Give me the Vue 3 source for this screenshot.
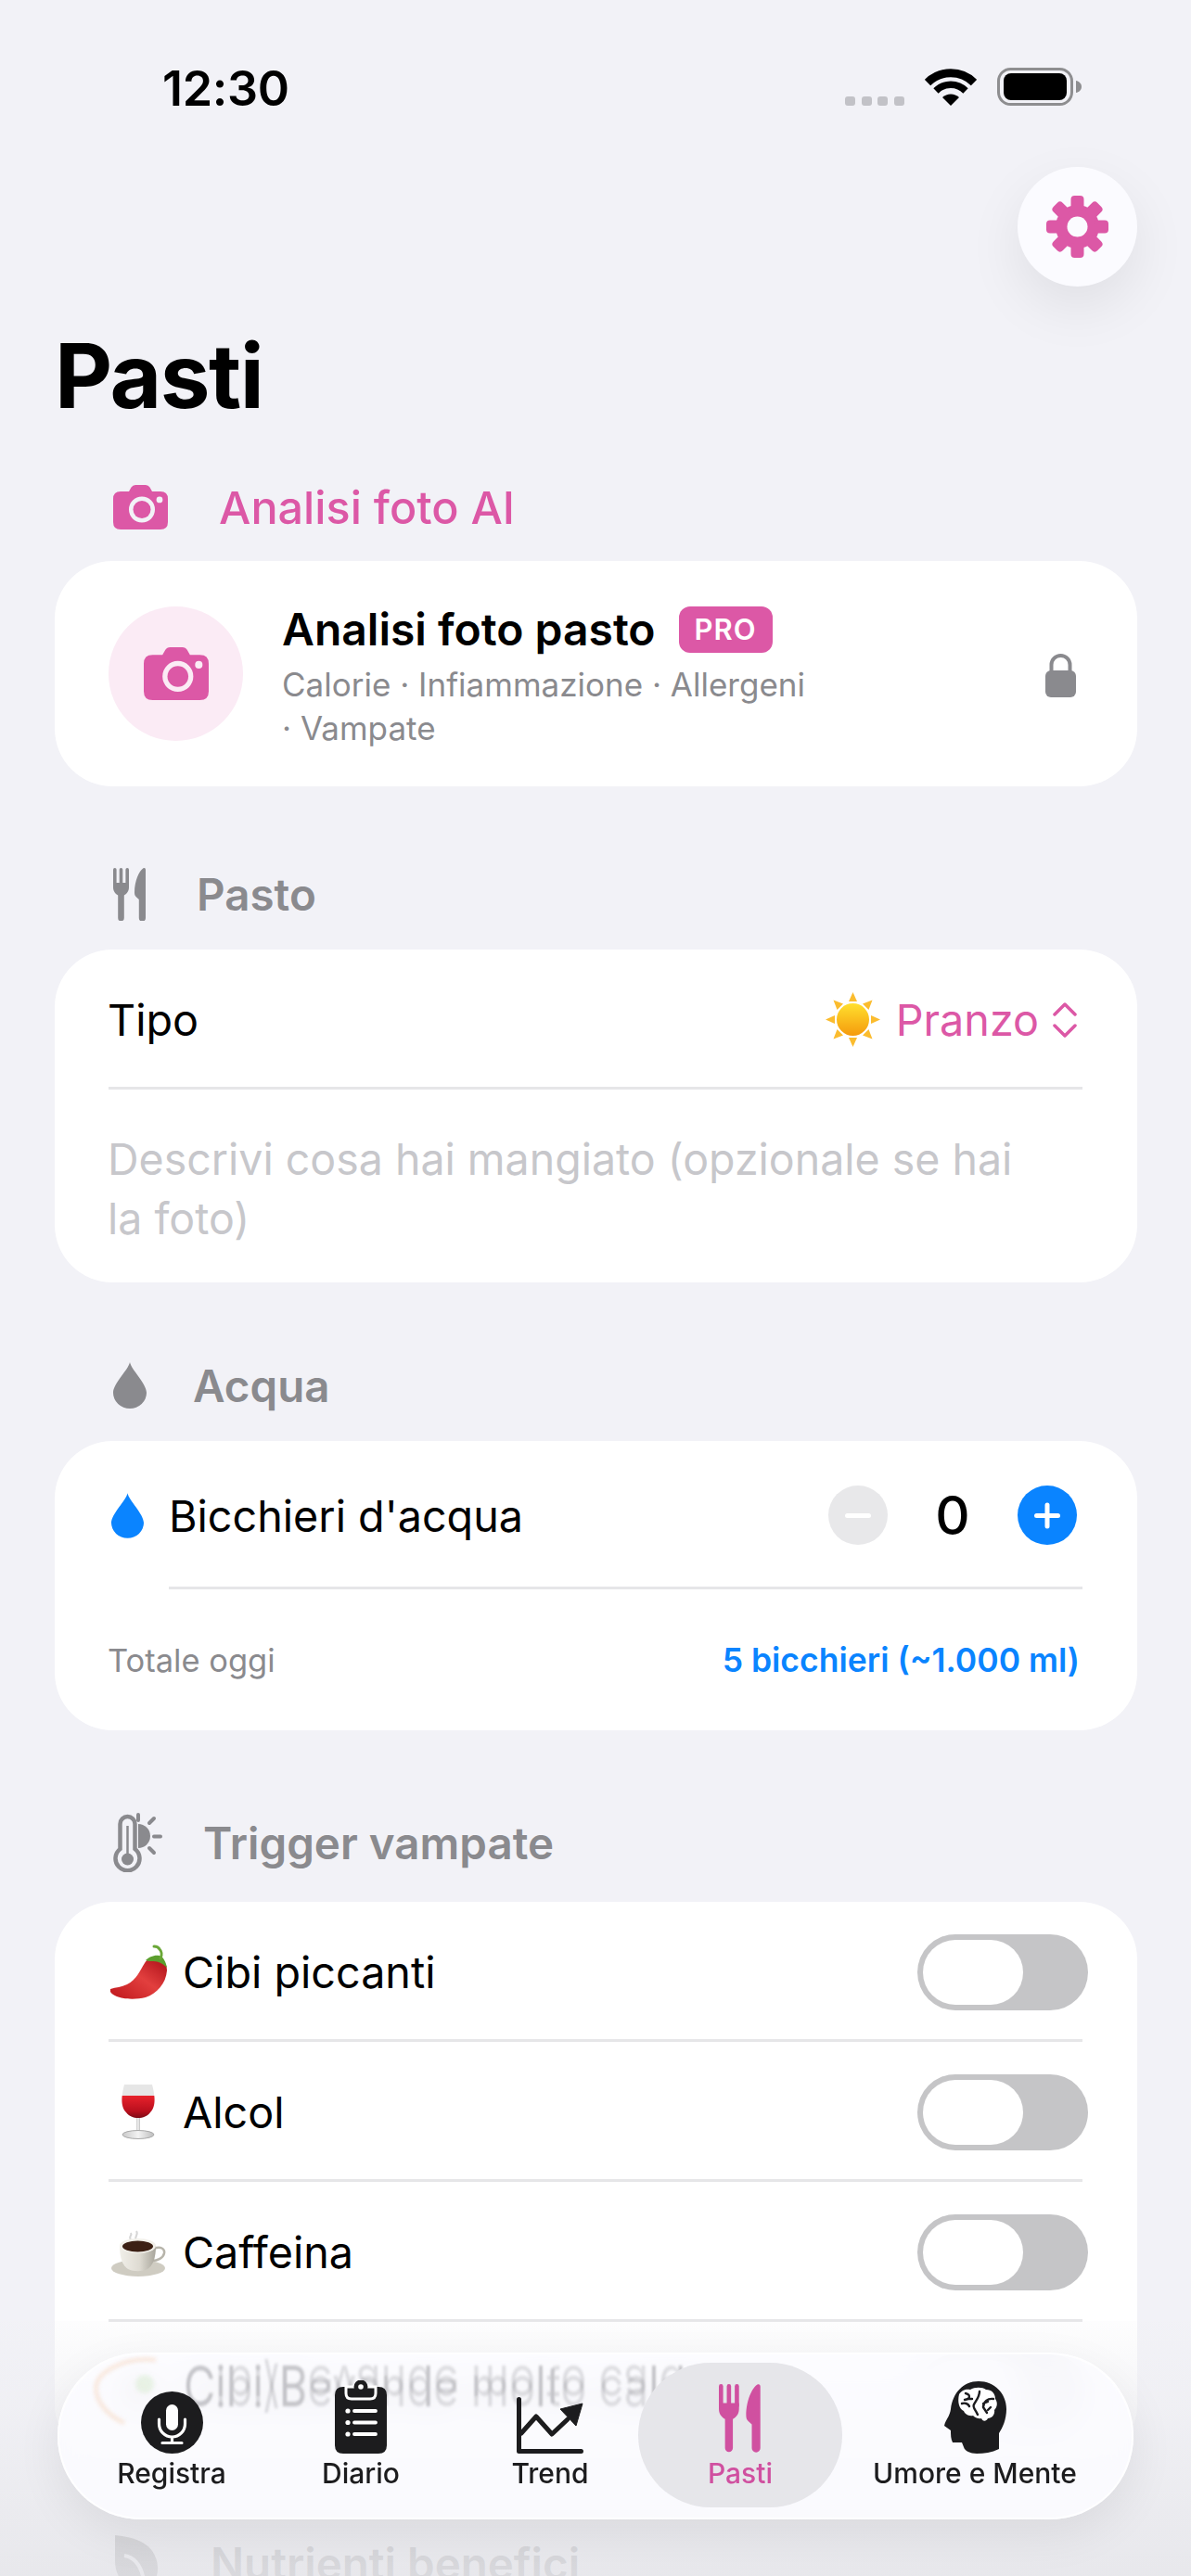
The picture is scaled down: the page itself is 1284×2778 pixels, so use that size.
<template>
  <div class="phone">
    <!-- shared glyphs -->
    <svg class="defs" width="0" height="0" aria-hidden="true">
      <defs>
        <linearGradient id="chiliFill" x1="0.1" y1="1" x2="0.9" y2="0.2">
          <stop offset="0" stop-color="#c21a1f" />
          <stop offset="0.6" stop-color="#e23f3e" />
          <stop offset="1" stop-color="#bb1c22" />
        </linearGradient>
        <linearGradient id="wineFill" x1="0" y1="0" x2="0" y2="1">
          <stop offset="0" stop-color="#e8222c" />
          <stop offset="0.7" stop-color="#b90f1d" />
          <stop offset="1" stop-color="#7d0b16" />
        </linearGradient>
        <linearGradient id="glassFill" x1="0" y1="0" x2="1" y2="0">
          <stop offset="0" stop-color="#c9c9c9" />
          <stop offset="0.5" stop-color="#f3f3f3" />
          <stop offset="1" stop-color="#bdbdbd" />
        </linearGradient>
        <linearGradient id="cupFill" x1="0" y1="0" x2="1" y2="0">
          <stop offset="0" stop-color="#f1efe9" />
          <stop offset="0.55" stop-color="#dedbd2" />
          <stop offset="1" stop-color="#a8a59b" />
        </linearGradient>
        <linearGradient id="sunFill" x1="0" y1="0" x2="0" y2="1">
          <stop offset="0" stop-color="#ffe02e" />
          <stop offset="1" stop-color="#f59a0c" />
        </linearGradient>
      </defs>
      <symbol id="camera" viewBox="0 0 59 48">
        <path
          fill-rule="evenodd"
          d="M8 7h9l2.500-4.500Q21 0 24 0h11q3 0 4.500 2.500L42 7h9q8 0 8 8v25q0 8-8 8H8q-8 0-8-8V15q0-8 8-8ZM31 12.500a14 14 0 1 0 0 28 14 14 0 0 0 0-28ZM50 12.500a3.400 3.400 0 1 0 0 6.800 3.400 3.400 0 0 0 0-6.800Z"
        />
        <circle cx="31" cy="26.500" r="9.500" />
      </symbol>
      <symbol id="forkKnife" viewBox="0 0 36 57">
        <rect x="0" y="0" width="3.600" height="20" rx="1.800" />
        <rect x="6.700" y="0" width="3.600" height="20" rx="1.800" />
        <rect x="13.400" y="0" width="3.600" height="20" rx="1.800" />
        <path d="M0 16h17v5c0 5-3.500 7.500-5.200 8.500V54a3.300 3.300 0 0 1-6.600 0V29.500C3.500 28.500 0 26 0 21Z" />
        <path d="M35 2v52a3.600 3.600 0 0 1-7.200 0V34l-3-2.800C23.500 30 23 28.500 23 26.500 23 14 28 3 32.500.300 34-.400 35 .500 35 2Z" />
      </symbol>
      <symbol id="drop" viewBox="0 0 36 50">
        <path d="M18 0c1.500 8 18 23 18 33a18 17 0 0 1-36 0C0 23 16.500 8 18 0Z" />
      </symbol>
      <symbol id="chili" viewBox="0 0 61 59">
        <path d="M0 48c6-2 12-2 18-5 10-5 14-15 19-23 3-5 9-7 14-6 7 2 10 8 10 14-1 14-11 25-23 29-12 3-28 2-35-3-3-2-4-4-3-6Z" fill="url(#chiliFill)" />
        <path d="M38 17c4-4 12-7 17-4 2 1 5 6 6 12-3-3-6-5-9-6-5-2-10 0-14-2Z" fill="#5c9e2e" />
        <path d="M54 15c2-4 1-8-1-10-1-2-3-3-6-3" fill="none" stroke="#6aa737" stroke-width="3" stroke-linecap="round" />
      </symbol>
      <symbol id="wine" viewBox="0 0 36 59">
        <path d="M3 0h30c3 11 4 22-2 30-3 4-8 6-13 6s-10-2-13-6C-1 22 0 11 3 0Z" fill="#e6e6e6" />
        <path d="M.700 12h34.600c.8 7 0 14-4.300 18-3 4-8 6-13 6s-10-2-13-6C.700 26-.100 19 .700 12Z" fill="url(#wineFill)" />
        <rect x="16" y="36" width="4" height="15" fill="url(#glassFill)" />
        <ellipse cx="18" cy="54" rx="17" ry="4.500" fill="url(#glassFill)" stroke="#a9a9a9" />
      </symbol>
      <symbol id="cup" viewBox="0 0 59 52">
        <path d="M21 12c-3-3 2-4 0-7M27 13c-3-4 3-6 0-10" fill="none" stroke="#d6d6d6" stroke-width="2" />
        <ellipse cx="29" cy="43" rx="29" ry="9" fill="#cfccc2" />
        <path d="M46 22c7-3 12 0 11 5-1 5-7 8-13 8" fill="none" stroke="#b7b4aa" stroke-width="2.500" />
        <path d="M9 19h39c0 13-3 21-9 25-6 3-15 3-21 0-6-4-9-12-9-25Z" fill="url(#cupFill)" />
        <ellipse cx="28.500" cy="19" rx="19.500" ry="8" fill="#f2f0ea" />
        <ellipse cx="28.500" cy="19.500" rx="16.500" ry="6" fill="#3c2014" />
      </symbol>
      <symbol id="sun" viewBox="0 0 59 59">
        <g fill="#fbbc2e">
          <path d="M29.500 0l4.500 10h-9Z" />
          <path d="M29.500 59l-4.500-10h9Z" />
          <path d="M0 29.500l10-4.500v9Z" />
          <path d="M59 29.500l-10 4.500v-9Z" />
          <path d="M8.500 8.500l10.500 4-6.500 6.500Z" />
          <path d="M50.500 8.500l-4 10.500-6.500-6.500Z" />
          <path d="M8.500 50.500l4-10.500 6.500 6.500Z" />
          <path d="M50.500 50.500l-10.500-4 6.500-6.500Z" />
        </g>
        <circle cx="29.500" cy="29.500" r="17.500" fill="url(#sunFill)" />
      </symbol>
    </svg>

    <div class="status">
      <span class="time">12:30</span>
      <div class="status-right">
        <svg class="signal" width="64" height="10" viewBox="0 0 64 10">
          <rect x="0" width="11" height="10" rx="3" />
          <rect x="18" width="11" height="10" rx="3" />
          <rect x="35" width="11" height="10" rx="3" />
          <rect x="53" width="11" height="10" rx="3" />
        </svg>
        <svg width="56" height="40" viewBox="0 0 56 40">
          <path d="M3 15a35.500 35.500 0 0 1 50 0" fill="none" stroke="#000" stroke-width="9" />
          <path d="M12 24a22.500 22.500 0 0 1 32 0" fill="none" stroke="#000" stroke-width="7.500" />
          <path d="M19 31a13 13 0 0 1 18 0l-9 9Z" />
        </svg>
        <svg width="91" height="41" viewBox="0 0 91 41">
          <rect x="1.500" y="1.500" width="79" height="38" rx="13" fill="none" stroke="#8e8e90" stroke-width="3" />
          <rect x="7" y="6" width="68" height="29" rx="8" />
          <path d="M85 14c3 .5 6 3 6 6.500S88 26.500 85 27Z" fill="#8e8e90" />
        </svg>
      </div>
    </div>

    <div class="top-actions">
      <button class="settings" type="button" aria-label="Impostazioni">
        <svg width="67" height="67" viewBox="0 0 67 67">
          <g fill="#dc58a6">
            <circle cx="33.500" cy="33.500" r="23.500" />
            <rect
              v-for="a in gearAngles"
              :key="a"
              x="26.500"
              y="0"
              width="14"
              height="16"
              rx="4"
              :transform="`rotate(${a} 33.500 33.500)`"
            />
          </g>
          <circle cx="33.500" cy="33.500" r="11" fill="#fbfbff" />
        </svg>
      </button>
    </div>

    <h1 class="title">Pasti</h1>

    <section class="sec sec--photo">
      <div class="sec-head sec-head--pink">
        <svg class="head-icon" width="59" height="48"><use href="#camera" /></svg>
        <span class="head-label">Analisi foto AI</span>
      </div>
      <div class="card photo-card">
        <div class="photo-circle">
          <svg width="70" height="57"><use href="#camera" /></svg>
        </div>
        <div class="photo-text">
          <div class="photo-title">
            <span>Analisi foto pasto</span>
            <span class="pro">PRO</span>
          </div>
          <div class="photo-sub">Calorie · Infiammazione · Allergeni · Vampate</div>
        </div>
        <svg class="lock" width="33" height="48" viewBox="0 0 33 48">
          <path d="M6.500 22V13a10 10 0 0 1 20 0v9" fill="none" stroke="#8a8a8e" stroke-width="4" />
          <rect x="0" y="19" width="33" height="29" rx="6" fill="#8a8a8e" />
        </svg>
      </div>
    </section>

    <section class="sec sec--meal">
      <div class="sec-head">
        <svg class="head-icon" width="36" height="57"><use href="#forkKnife" /></svg>
        <span class="head-label">Pasto</span>
      </div>
      <div class="card">
        <div class="row row--type">
          <span class="type-label">Tipo</span>
          <div class="picker">
            <svg width="59" height="59"><use href="#sun" /></svg>
            <span>Pranzo</span>
            <svg width="26" height="38" viewBox="0 0 26 38" fill="none" stroke="#dc58a6" stroke-width="3.500" stroke-linecap="round" stroke-linejoin="round">
              <path d="M2 13 13 2l11 11" />
              <path d="M2 25l11 11 11-11" />
            </svg>
          </div>
        </div>
        <div class="placeholder">Descrivi cosa hai mangiato (opzionale se hai la foto)</div>
      </div>
    </section>

    <section class="sec sec--water">
      <div class="sec-head">
        <svg class="head-icon" width="36" height="50"><use href="#drop" /></svg>
        <span class="head-label">Acqua</span>
      </div>
      <div class="card">
        <div class="water-row">
          <svg class="water-drop" width="35" height="49"><use href="#drop" /></svg>
          <span class="water-label">Bicchieri d'acqua</span>
          <span class="step step--minus"><i class="bar"></i></span>
          <span class="count">0</span>
          <span class="step step--plus"><i class="bar"></i><i class="bar bar--v"></i></span>
        </div>
        <div class="water-total">
          <span>Totale oggi</span>
          <span class="water-amount">5 bicchieri (~1.000 ml)</span>
        </div>
      </div>
    </section>

    <section class="sec sec--trigger">
      <div class="sec-head">
        <svg class="head-icon" width="54" height="64" viewBox="0 0 54 64">
          <path d="M7.500 39V12a8 8 0 0 1 16 0v27a13 13 0 1 1-16 0Z" fill="none" stroke="#8a8a8e" stroke-width="4.500" />
          <path d="M15.500 14v36" stroke="#8a8a8e" stroke-width="2.500" />
          <circle cx="15.500" cy="50" r="6.500" fill="#8a8a8e" />
          <path d="M27 12a13 13 0 0 1 0 26Z" fill="#8a8a8e" />
          <path d="M27 2v6M39 11l5-5M44 25.500h7M39 38l5 5" stroke="#8a8a8e" stroke-width="4" stroke-linecap="round" />
        </svg>
        <span class="head-label">Trigger vampate</span>
      </div>
      <div class="card">
        <div v-for="t in triggers" :key="t.label" class="trigger">
          <span class="emoji">
            <svg :width="t.w" :height="t.h"><use :href="'#' + t.icon" /></svg>
          </span>
          <span class="trigger-label">{{ t.label }}</span>
          <span class="toggle"><i class="knob"></i></span>
        </div>
      </div>
    </section>

    <section class="sec sec--nutrients">
      <div class="sec-head">
        <svg class="head-icon" width="50" height="60" viewBox="0 0 50 60">
          <path d="M2 0c20 2 44 8 46 34 1 14-8 24-20 24C12 58 2 44 2 28Z" fill="#8a8a8e" />
          <path d="M12 22c12 2 20 12 22 34" fill="none" stroke="#f2f2f7" stroke-width="4" />
        </svg>
        <span class="head-label">Nutrienti benefici</span>
      </div>
    </section>

    <!-- fade behind the floating tab bar -->
    <div class="bottom-fade"></div>

    <nav class="tabbar">
      <!-- lens refraction of the row underneath -->
      <svg class="ghost-emoji" width="80" height="76" viewBox="0 0 80 76" aria-hidden="true">
        <path d="M72 4C40 0 12 16 8 30c-3 14 8 32 30 42" fill="none" stroke="#f3c29c" stroke-width="4" />
        <circle cx="60" cy="30" r="10" fill="#cfe8c4" />
      </svg>
      <div class="ghost" aria-hidden="true">Cibi/Bevande molto calde</div>
      <div class="tab">
        <svg class="tab-icon" width="67" height="67" viewBox="0 0 67 67">
          <circle cx="33.500" cy="33.500" r="33.500" fill="#1c1c1e" />
          <rect x="27" y="14" width="13" height="28" rx="6.500" fill="#fff" />
          <path d="M19.500 30v5a14 14 0 0 0 28 0v-5M33.500 49v6M23 55.500h21" fill="none" stroke="#fff" stroke-width="3.200" stroke-linecap="round" />
        </svg>
        <span>Registra</span>
      </div>
      <div class="tab">
        <svg class="tab-icon" width="56" height="79" viewBox="0 0 56 79">
          <path d="M9 7h38q9 0 9 9v54q0 9-9 9H9q-9 0-9-9V16q0-9 9-9Z" fill="#1c1c1e" />
          <path d="M12 7h32v7q0 6-6 6H18q-6 0-6-6Z" fill="#1c1c1e" stroke="#fff" stroke-width="3" />
          <circle cx="28" cy="7" r="7.500" fill="#1c1c1e" />
          <circle cx="28" cy="7" r="2.800" fill="#fff" />
          <g stroke="#fff" stroke-width="3.800" stroke-linecap="round">
            <path d="M21 33h23M21 45.500h23M21 58h23" />
          </g>
          <g fill="#fff">
            <circle cx="14" cy="33" r="2.600" />
            <circle cx="14" cy="45.500" r="2.600" />
            <circle cx="14" cy="58" r="2.600" />
          </g>
        </svg>
        <span>Diario</span>
      </div>
      <div class="tab">
        <svg class="tab-icon" width="72" height="61" viewBox="0 0 72 61">
          <g fill="none" stroke="#1c1c1e" stroke-width="5" stroke-linecap="round" stroke-linejoin="round">
            <path d="M2.500 2.500v56h67" />
            <path d="M5 39l16-18 17 19 17-16" />
          </g>
          <path d="M47 13l24-6-7 24Z" fill="#1c1c1e" stroke="#1c1c1e" stroke-linejoin="round" />
        </svg>
        <span>Trend</span>
      </div>
      <div class="tab tab--active">
        <svg class="tab-icon" width="46" height="77"><use href="#forkKnife" /></svg>
        <span>Pasti</span>
      </div>
      <div class="tab">
        <svg class="tab-icon" width="67" height="78" viewBox="0 0 67 78">
          <path d="M37 0C54 0 67 13 67 30c0 11-4 20-8 26v17c-8 4-16 5-24 5-7 0-13-3-14-7l-2-5H9c-2-4-2-8-2-13L0 48c1-6 6-10 7-18C9 13 20 0 37 0Z" fill="#1c1c1e" />
          <path d="M16 14c3-5 8-6 12-5 5-3 13-3 17 0 6 0 10 4 10 10 3 4 2 9-1 12 1 5-3 9-7 9-2 4-6 3-7 0-3 1-7-1-9-3-5 1-9-2-10-5-5-2-7-10-5-18Z" fill="#fff" />
          <path d="M23 13c4 1 5 3 3 6l-4 1M19 24c3-1 7 0 8 3M38 11c0 6-4 10-6 14-2 3 2 6 4 11M30 19l-5 0M53 19c-6-1-11 3-11 9l4 6M42 24l5-2M50 28l-3 3" fill="none" stroke="#1c1c1e" stroke-width="2.400" stroke-linecap="round" stroke-linejoin="round" />
        </svg>
        <span>Umore e Mente</span>
      </div>
    </nav>
  </div>
</template>

<script setup>
const gearAngles = [0, 45, 90, 135, 180, 225, 270, 315]

const triggers = [
  { label: 'Cibi piccanti', icon: 'chili', w: 61, h: 59 },
  { label: 'Alcol', icon: 'wine', w: 36, h: 59 },
  { label: 'Caffeina', icon: 'cup', w: 59, h: 52 },
  { label: 'Cibi/Bevande molto calde', icon: 'cup', w: 59, h: 52 }
]
</script>

<style>
html,
body {
  margin: 0;
  background: #f2f2f7;
}
</style>

<style scoped>
.phone {
  position: relative;
  width: 1284px;
  height: 2778px;
  overflow: hidden;
  background: #f2f2f7;
  color: #000;
  font-family: Inter, "Noto Sans", sans-serif;
}

.defs {
  position: absolute;
}

/* status bar */
.status {
  display: flex;
  height: 180px;
  box-sizing: border-box;
  padding: 73px 118px 0 175px;
}

.time {
  font-size: 52px;
  font-weight: 600;
  line-height: 41px;
  margin-top: 2px;
  letter-spacing: -0.3px;
}

.status-right {
  display: flex;
  align-items: flex-end;
  gap: 22px;
  margin-left: auto;
  height: 41px;
}

.signal {
  fill: #c2c2c7;
}

.top-actions {
  display: flex;
  justify-content: flex-end;
  padding-right: 58px;
}

.settings {
  display: flex;
  align-items: center;
  justify-content: center;
  width: 129px;
  height: 129px;
  padding: 0;
  border: 0;
  border-radius: 50%;
  background: #fbfbff;
  box-shadow: 0 22px 60px rgba(0, 0, 0, 0.08);
}

.title {
  margin: 46px 0 0 59px;
  font-size: 96px;
  font-weight: 700;
  line-height: 100px;
  letter-spacing: -1.5px;
}

/* sections */
.sec {
  margin: 0 58px 0 59px;
}

.sec-head {
  position: relative;
  display: flex;
  align-items: center;
  height: 60px;
  color: #8a8a8e;
}

.sec-head--pink {
  color: #dc58a6;
}

.head-icon {
  flex: none;
  margin-left: 63px;
  fill: currentColor;
}

.head-label {
  font-size: 47.500px;
  font-weight: 600;
}

.sec-head--pink .head-label {
  font-size: 48.500px;
  font-weight: 500;
}

.sec--photo {
  margin-top: 62px;
}

.sec--photo .head-label {
  margin-left: 55px;
}

.sec--photo .sec-head {
  margin-bottom: 28px;
}

.sec--meal {
  margin-top: 86px;
}

.sec--meal .head-label {
  margin-left: 54px;
}

.sec--meal .sec-head {
  margin-bottom: 30px;
}

.sec--water {
  margin-top: 81px;
}

.sec--water .head-label {
  margin-left: 50px;
}

.sec--water .sec-head {
  margin-bottom: 30px;
}

.sec--trigger {
  margin-top: 91px;
}

.sec--trigger .head-label {
  margin-left: 43px;
}

.sec--trigger .sec-head {
  margin-bottom: 34px;
}

.sec--nutrients {
  margin-top: 79px;
}

.sec--nutrients .head-label {
  margin-left: 55px;
}

.card {
  box-sizing: border-box;
  padding: 0 59px 0 58px;
  border-radius: 62px;
  background: #fff;
  font-size: 46.700px;
}

/* photo card */
.photo-card {
  display: flex;
  align-items: center;
  height: 243px;
}

.photo-circle {
  display: flex;
  flex: none;
  align-items: center;
  justify-content: center;
  width: 145px;
  height: 145px;
  border-radius: 50%;
  background: #fbebf5;
  fill: #dc58a6;
}

.photo-text {
  width: 572px;
  margin-left: 42px;
  padding-top: 6px;
}

.photo-title {
  display: flex;
  align-items: center;
  gap: 25px;
  font-size: 48px;
  font-weight: 600;
  line-height: 56px;
}

.pro {
  padding: 0 17px;
  border-radius: 12px;
  background: #dc58a6;
  color: #fff;
  font-size: 31px;
  line-height: 50px;
  letter-spacing: 1px;
}

.photo-sub {
  margin-top: 8px;
  color: #8a8a8e;
  font-size: 35px;
  line-height: 47px;
}

.lock {
  flex: none;
  margin-left: auto;
  margin-right: 7px;
  margin-top: 2px;
}

/* meal card */
.row--type {
  display: flex;
  align-items: center;
  justify-content: space-between;
  box-sizing: border-box;
  height: 151px;
  padding-top: 3px;
  border-bottom: 3px solid #e6e6e8;
}

.type-label {
  margin-left: -1px;
}

.picker {
  display: flex;
  align-items: center;
  margin-right: 6px;
  color: #dc58a6;
}

.picker span {
  margin: 0 15px 0 17px;
}

.placeholder {
  padding: 43px 40px 37px 0;
  margin-left: -1px;
  color: #c7c7cb;
  font-size: 46.500px;
  line-height: 64px;
}

/* water card */
.water-row {
  position: relative;
  display: flex;
  align-items: center;
  height: 160px;
}

.water-row::after {
  content: "";
  position: absolute;
  left: 65px;
  right: 0;
  bottom: 0;
  height: 3px;
  background: #e6e6e8;
}

.water-drop {
  flex: none;
  margin-left: 3px;
  fill: #0a84ff;
}

.water-label {
  margin: 2px 0 0 27px;
}

.step {
  position: relative;
  flex: none;
  width: 64px;
  height: 64px;
  border-radius: 50%;
}

.step--minus {
  margin-left: auto;
  background: #e8e8ea;
}

.step--plus {
  margin-right: 6px;
  background: #0a84ff;
}

.bar {
  position: absolute;
  top: 29.500px;
  left: 18px;
  width: 28px;
  height: 5px;
  border-radius: 2.500px;
  background: #fff;
}

.bar--v {
  transform: rotate(90deg);
}

.count {
  width: 140px;
  font-size: 58px;
  font-weight: 500;
  text-align: center;
}

.water-total {
  display: flex;
  align-items: center;
  justify-content: space-between;
  height: 152px;
  margin-left: -1px;
  padding-right: 3px;
  color: #8a8a8e;
  font-size: 34.500px;
}

.water-amount {
  color: #0a84ff;
  font-size: 35.500px;
  font-weight: 600;
}

/* triggers */
.trigger {
  display: flex;
  align-items: center;
  box-sizing: border-box;
  height: 151px;
  padding-top: 3px;
  border-bottom: 3px solid #e6e6e8;
}

.emoji {
  display: flex;
  justify-content: center;
  width: 64px;
}

.trigger-label {
  margin-left: 16px;
}

.toggle {
  position: relative;
  flex: none;
  width: 184px;
  height: 82px;
  margin-left: auto;
  margin-right: -6px;
  border-radius: 41px;
  background: #c5c5c7;
}

.knob {
  position: absolute;
  top: 6px;
  left: 6px;
  width: 108px;
  height: 70px;
  border-radius: 35px;
  background: #fff;
}

/* bottom chrome */
.bottom-fade {
  position: absolute;
  left: 0;
  right: 0;
  bottom: 0;
  height: 275px;
  background: linear-gradient(
    180deg,
    rgba(240, 240, 243, 0.12) 0%,
    rgba(238, 238, 242, 0.6) 35%,
    rgba(230, 230, 234, 0.86) 100%
  );
}

.tabbar {
  position: absolute;
  left: 62px;
  top: 2537px;
  display: grid;
  grid-template-columns: repeat(4, 204px) 304px;
  box-sizing: border-box;
  width: 1160px;
  height: 180px;
  padding: 11px 19px 13px 21px;
  overflow: hidden;
  border-radius: 90px;
  background: rgba(252, 252, 255, 0.88);
  box-shadow: 0 16px 50px rgba(0, 0, 0, 0.07), inset 0 0 0 2px rgba(255, 255, 255, 0.8);
  backdrop-filter: blur(14px);
}

.ghost {
  position: absolute;
  top: 2px;
  left: 136px;
  color: rgba(60, 60, 67, 0.15);
  font-size: 47px;
  line-height: 68px;
  white-space: nowrap;
  transform: scaleY(1.3);
  filter: blur(1.200px);
}

.ghost::after {
  content: "Cibi/Bevande molto calde";
  position: absolute;
  left: 0;
  top: 0;
  transform: scaleY(-1);
}

.ghost-emoji {
  position: absolute;
  top: 4px;
  left: 34px;
  opacity: 0.4;
  filter: blur(2px);
}

.tab {
  position: relative;
  display: flex;
  flex-direction: column;
  align-items: center;
  color: #1c1c1e;
  font-size: 30px;
  font-weight: 500;
  line-height: 36px;
  padding-top: 17px;
}

.tab span {
  margin-top: auto;
  padding-bottom: 19px;
}

.tab-icon {
  display: block;
  margin-top: auto;
  fill: currentColor;
}

.tab-icon + span {
  margin-top: 3px;
}

.tab--active {
  margin: 0 -9px 0 -7px;
  border-radius: 78px;
  background: #e6e6ea;
  color: #d050a0;
}
</style>
